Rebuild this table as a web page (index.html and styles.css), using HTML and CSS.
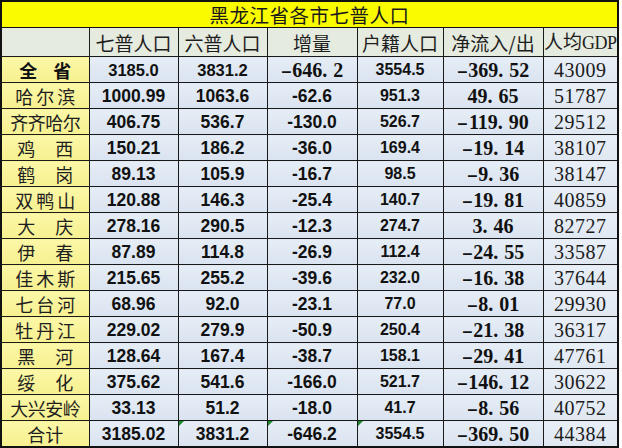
FILE: index.html
```html
<!DOCTYPE html>
<html lang="zh-CN">
<head>
<meta charset="utf-8">
<title>黑龙江省各市七普人口</title>
<link rel="stylesheet" href="styles.css">
</head>
<body>
<table class="sheet">
  <colgroup>
    <col class="c1"><col class="c2"><col class="c3"><col class="c4"><col class="c5"><col class="c6"><col class="c7">
  </colgroup>
  <tr class="title-row"><td colspan="7" class="title">黑龙江省各市七普人口</td></tr>
  <tr class="head-row">
    <td class="hd blank"></td>
    <td class="hd">七普人口</td>
    <td class="hd">六普人口</td>
    <td class="hd">增量</td>
    <td class="hd">户籍人口</td>
    <td class="hd">净流入/出</td>
    <td class="hd">人均<span class="gdp">GDP</span></td>
  </tr>
  <tr>
    <td class="lab two bold">全 省</td>
    <td class="num first">3185.0</td>
    <td class="num first">3831.2</td>
    <td class="net"><span class="neg">-</span>646<span class="dp">.</span>2</td>
    <td class="num reg">3554.5</td>
    <td class="net"><span class="neg">-</span>369<span class="dp">.</span>52</td>
    <td class="gdpv">43009</td>
  </tr>
  <tr>
    <td class="lab three">哈尔滨</td>
    <td class="num">1000.99</td><td class="num">1063.6</td><td class="num">-62.6</td><td class="num reg">951.3</td>
    <td class="net">49<span class="dp">.</span>65</td><td class="gdpv">51787</td>
  </tr>
  <tr>
    <td class="lab four">齐齐哈尔</td>
    <td class="num">406.75</td><td class="num">536.7</td><td class="num">-130.0</td><td class="num reg">526.7</td>
    <td class="net"><span class="neg">-</span>119<span class="dp">.</span>90</td><td class="gdpv">29512</td>
  </tr>
  <tr>
    <td class="lab two">鸡 西</td>
    <td class="num">150.21</td><td class="num">186.2</td><td class="num">-36.0</td><td class="num reg">169.4</td>
    <td class="net"><span class="neg">-</span>19<span class="dp">.</span>14</td><td class="gdpv">38107</td>
  </tr>
  <tr>
    <td class="lab two">鹤 岗</td>
    <td class="num">89.13</td><td class="num">105.9</td><td class="num">-16.7</td><td class="num reg">98.5</td>
    <td class="net"><span class="neg">-</span>9<span class="dp">.</span>36</td><td class="gdpv">38147</td>
  </tr>
  <tr>
    <td class="lab three">双鸭山</td>
    <td class="num">120.88</td><td class="num">146.3</td><td class="num">-25.4</td><td class="num reg">140.7</td>
    <td class="net"><span class="neg">-</span>19<span class="dp">.</span>81</td><td class="gdpv">40859</td>
  </tr>
  <tr>
    <td class="lab two">大 庆</td>
    <td class="num">278.16</td><td class="num">290.5</td><td class="num">-12.3</td><td class="num reg">274.7</td>
    <td class="net">3<span class="dp">.</span>46</td><td class="gdpv">82727</td>
  </tr>
  <tr>
    <td class="lab two">伊 春</td>
    <td class="num">87.89</td><td class="num">114.8</td><td class="num">-26.9</td><td class="num reg">112.4</td>
    <td class="net"><span class="neg">-</span>24<span class="dp">.</span>55</td><td class="gdpv">33587</td>
  </tr>
  <tr>
    <td class="lab three">佳木斯</td>
    <td class="num">215.65</td><td class="num">255.2</td><td class="num">-39.6</td><td class="num reg">232.0</td>
    <td class="net"><span class="neg">-</span>16<span class="dp">.</span>38</td><td class="gdpv">37644</td>
  </tr>
  <tr>
    <td class="lab three">七台河</td>
    <td class="num">68.96</td><td class="num">92.0</td><td class="num">-23.1</td><td class="num reg">77.0</td>
    <td class="net"><span class="neg">-</span>8<span class="dp">.</span>01</td><td class="gdpv">29930</td>
  </tr>
  <tr>
    <td class="lab three">牡丹江</td>
    <td class="num">229.02</td><td class="num">279.9</td><td class="num">-50.9</td><td class="num reg">250.4</td>
    <td class="net"><span class="neg">-</span>21<span class="dp">.</span>38</td><td class="gdpv">36317</td>
  </tr>
  <tr>
    <td class="lab two">黑 河</td>
    <td class="num">128.64</td><td class="num">167.4</td><td class="num">-38.7</td><td class="num reg">158.1</td>
    <td class="net"><span class="neg">-</span>29<span class="dp">.</span>41</td><td class="gdpv">47761</td>
  </tr>
  <tr>
    <td class="lab two">绥 化</td>
    <td class="num">375.62</td><td class="num">541.6</td><td class="num">-166.0</td><td class="num reg">521.7</td>
    <td class="net"><span class="neg">-</span>146<span class="dp">.</span>12</td><td class="gdpv">30622</td>
  </tr>
  <tr>
    <td class="lab four">大兴安岭</td>
    <td class="num">33.13</td><td class="num">51.2</td><td class="num">-18.0</td><td class="num reg">41.7</td>
    <td class="net"><span class="neg">-</span>8<span class="dp">.</span>56</td><td class="gdpv">40752</td>
  </tr>
  <tr class="total">
    <td class="lab tot">合计</td>
    <td class="num">3185.02</td>
    <td class="num"><span class="tri"></span>3831.2</td>
    <td class="num"><span class="tri"></span>-646.2</td>
    <td class="num reg"><span class="tri"></span>3554.5</td>
    <td class="net"><span class="neg">-</span>369<span class="dp">.</span>50</td>
    <td class="gdpv">44384</td>
  </tr>
</table>
</body>
</html>
```
FILE: styles.css
```css
html, body {
  margin: 0;
  padding: 0;
  background: #ffffff;
}

.sheet {
  border-collapse: collapse;
  table-layout: fixed;
  width: 617px;
  border: 2px solid #111;
  color: #111;
}

.c1 { width: 88px; }
.c2 { width: 89px; }
.c3 { width: 89px; }
.c4 { width: 90px; }
.c5 { width: 86px; }
.c6 { width: 100px; }
.c7 { width: 75px; }

.sheet td {
  border: 1px solid #1a1a1a;
  padding: 0;
  height: 25px;
  line-height: 24px;
  text-align: center;
  vertical-align: middle;
  white-space: nowrap;
  overflow: hidden;
  position: relative;
  background: linear-gradient(to bottom, #e6edf6, #d9e3ef);
}

.title-row td.title {
  height: 25px;
  overflow: visible;
  background: #fbfb00;
  font-family: "Noto Sans CJK SC", sans-serif;
  font-weight: 400;
  font-size: 19.5px;
  letter-spacing: 0.5px;
  line-height: 25px;
  color: #1a1a1a;
  border-bottom: 1px solid #111;
}

.head-row td.hd {
  height: 25px;
  overflow: visible;
  background: #e6ebe0;
  font-family: "Noto Sans CJK SC", sans-serif;
  font-weight: 400;
  font-size: 19px;
  line-height: 25px;
  color: #1e1e1e;
}

.gdp {
  font-family: "Liberation Serif", serif;
  font-size: 18px;
  letter-spacing: -0.5px;
}

td.lab {
  background: linear-gradient(to bottom, #fbf7a6, #f6f090);
  font-family: "Noto Sans CJK SC", sans-serif;
  font-weight: 400;
  font-size: 18px;
  color: #1e1e1e;
}

td.lab.two {
  letter-spacing: 8px;
  text-indent: 8px;
}

td.lab.three {
  letter-spacing: 3px;
  text-indent: 3px;
}

td.lab.four {
  letter-spacing: -0.5px;
}

td.lab.bold {
  font-weight: 700;
  color: #111;
  letter-spacing: 6px;
  text-indent: 6px;
}

td.num {
  font-family: "Liberation Sans", Arial, sans-serif;
  font-weight: 700;
  font-size: 17.5px;
}

td.num.reg {
  font-size: 16px;
}

td.num.first {
  font-size: 16.5px;
}

td.net {
  font-family: "Liberation Serif", serif;
  font-weight: 700;
  font-size: 20px;
}

.neg {
  display: inline-block;
  transform: scaleX(1.7);
  margin: 0 3px 0 2px;
}

.dp {
  margin-right: 6px;
}

td.gdpv {
  font-family: "Liberation Serif", serif;
  font-weight: 400;
  font-size: 20px;
  letter-spacing: 0.5px;
  color: #1c1c1c;
  background: linear-gradient(to bottom, #e9eff7, #dfe7f1);
}

.tri {
  position: absolute;
  left: 0;
  top: 0;
  width: 0;
  height: 0;
  border-top: 5px solid #1f8a2a;
  border-right: 5px solid transparent;
}
```
